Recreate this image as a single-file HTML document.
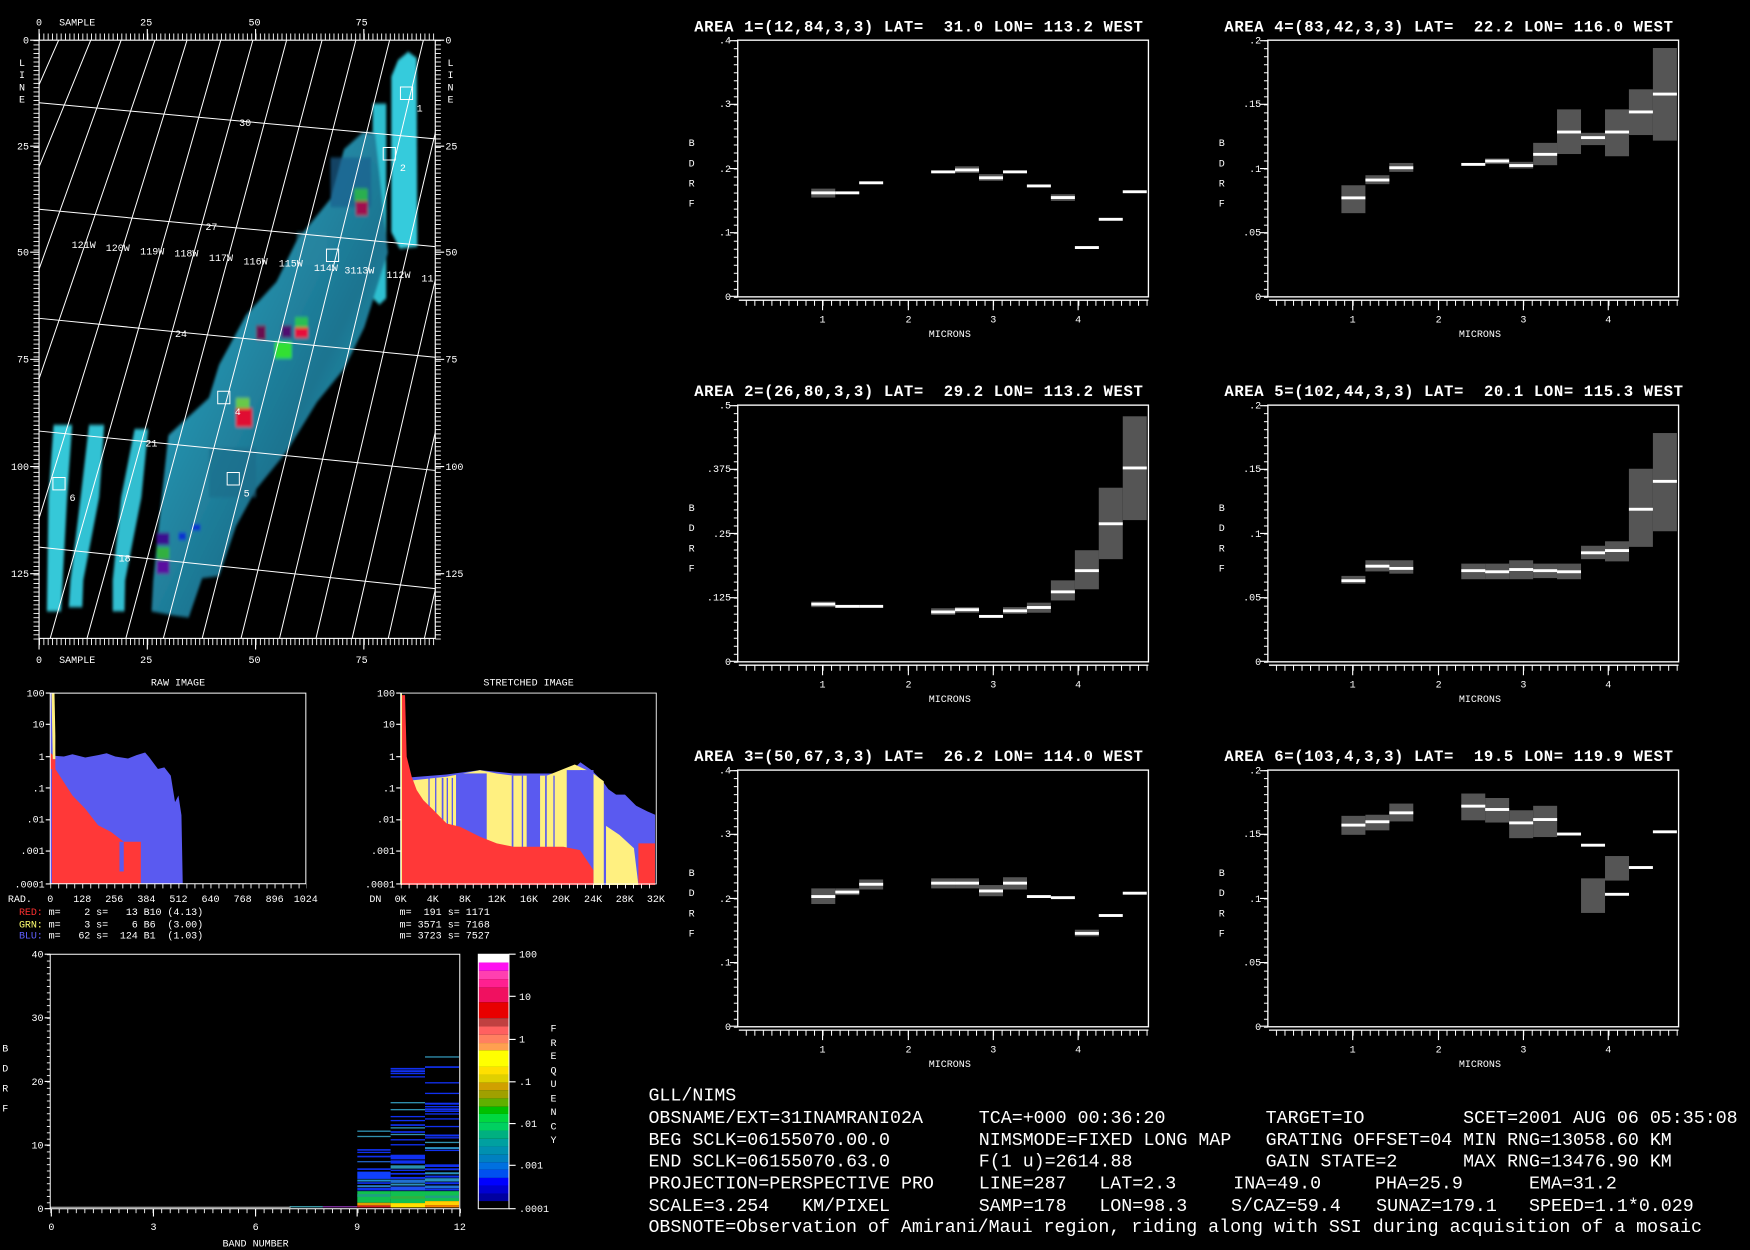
<!DOCTYPE html>
<html><head><meta charset="utf-8"><style>
html,body{margin:0;padding:0;background:#000;overflow:hidden}
svg{display:block}
text{font-family:"Liberation Mono",monospace;fill:#fff}
.s{font-size:9px}
.t{font-size:14px;font-weight:bold}
.b{font-size:16.4px}
</style></head><body>
<svg width="1750" height="1250" viewBox="0 0 1568 1120" preserveAspectRatio="none" xmlns="http://www.w3.org/2000/svg">
<defs>
<pattern id="pMH" x="35" y="0" width="3.88" height="10" patternUnits="userSpaceOnUse"><rect x="0" y="0" width="0.8" height="10" fill="#fff"/></pattern>
<pattern id="pMV" x="0" y="36" width="10" height="3.83" patternUnits="userSpaceOnUse"><rect x="0" y="0" width="10" height="0.8" fill="#fff"/></pattern>
<pattern id="pCY" x="0" y="36" width="10" height="7.1875" patternUnits="userSpaceOnUse"><rect x="0" y="0" width="10" height="0.9" fill="#fff"/></pattern>
<pattern id="pCX" x="660.6" y="0" width="7.64" height="10" patternUnits="userSpaceOnUse"><rect x="0" y="0" width="0.9" height="10" fill="#fff"/></pattern>
<pattern id="pHX" x="45" y="0" width="7.18" height="10" patternUnits="userSpaceOnUse"><rect x="0" y="0" width="0.8" height="10" fill="#fff"/></pattern>
<pattern id="pHX2" x="359" y="0" width="7.18" height="10" patternUnits="userSpaceOnUse"><rect x="0" y="0" width="0.8" height="10" fill="#fff"/></pattern>
<pattern id="pBX" x="45" y="0" width="7.65" height="10" patternUnits="userSpaceOnUse"><rect x="0" y="0" width="0.8" height="10" fill="#fff"/></pattern>
<pattern id="pBY" x="0" y="855" width="10" height="5.7" patternUnits="userSpaceOnUse"><rect x="0" y="0" width="10" height="0.8" fill="#fff"/></pattern>
<linearGradient id="gBand" x1="0" y1="0" x2="1" y2="1">
<stop offset="0" stop-color="#3fd6e6"/><stop offset="0.35" stop-color="#2590ac"/><stop offset="0.6" stop-color="#1c7490"/><stop offset="1" stop-color="#3ad0e0"/></linearGradient>
<filter id="blur" x="-10%" y="-10%" width="120%" height="120%"><feGaussianBlur stdDeviation="4"/></filter>
<clipPath id="mclip"><rect x="117" y="97" width="1173" height="1443"/></clipPath>
<g id="chart">
<rect x="661" y="36" width="368" height="230" fill="none" stroke="#fff" stroke-width="1.2"/>
<rect x="657.5" y="36" width="3.5" height="231" fill="url(#pCY)"/>
<path d="M654 36.5H661M654 93.5H661M654 151H661M654 208.5H661M654 265.5H661" stroke="#fff" stroke-width="1"/>
<path d="M662 269H1029" stroke="#fff" stroke-width="1.2"/>
<rect x="662" y="269" width="368" height="5" fill="url(#pCX)"/>
<path d="M737 269V278M813.9 269V278M890 269V278M966 269V278" stroke="#fff" stroke-width="1"/>
<text class="s" x="737" y="289" text-anchor="middle">1</text>
<text class="s" x="814" y="289" text-anchor="middle">2</text>
<text class="s" x="890" y="289" text-anchor="middle">3</text>
<text class="s" x="966" y="289" text-anchor="middle">4</text>
<text class="s" x="851" y="302" text-anchor="middle">MICRONS</text>
<text class="s" x="617" y="131">B</text><text class="s" x="617" y="149">D</text><text class="s" x="617" y="167">R</text><text class="s" x="617" y="185">F</text>
</g>
</defs>

<!-- ================= MAP ================= -->
<g transform="translate(35,36) scale(0.3026,0.3714) translate(-117,-97)">
<g clip-path="url(#mclip)">
<g filter="url(#blur)">
<polygon fill="#36cbdc" points="1180,145 1210,125 1235,140 1237,595 1185,600 1160,560 1160,185"/>
<polygon fill="#2fbfd0" points="1105,250 1145,250 1145,720 1125,735 1105,720"/>
<polygon fill="url(#gBand)" points="1075,320 1112,320 1150,610 1080,790 1020,890 940,970 850,1090 760,1180 700,1270 650,1390 600,1395 560,1490 515,1485 450,1475 455,1400 480,1200 500,1050 620,960 650,880 730,760 820,680 880,580 980,480 1020,360"/>
<polygon fill="#35c8d8" points="160,1025 215,1025 200,1200 182,1475 140,1475 145,1200"/>
<polygon fill="#33c2d4" points="265,1025 310,1025 295,1200 248,1400 245,1465 205,1465 210,1400 240,1200"/>
<polygon fill="#30bed0" points="400,1035 440,1035 420,1200 372,1400 370,1475 335,1475 335,1400 360,1200"/>
<rect x="980" y="380" width="120" height="120" fill="#1e5f8e" opacity="0.7"/>
<rect x="880" y="560" width="90" height="80" fill="#2a86a0" opacity="0.6"/>
<rect x="620" y="1080" width="140" height="120" fill="#1a6a88" opacity="0.6"/>
<rect x="1055" y="485" width="35" height="35" fill="#a01050"/>
<rect x="1050" y="455" width="40" height="30" fill="#30c040" opacity="0.8"/>
<rect x="875" y="790" width="38" height="25" fill="#e8103a"/>
<rect x="875" y="765" width="38" height="25" fill="#30d040" opacity="0.8"/>
<rect x="760" y="785" width="28" height="35" fill="#6a1050"/>
<rect x="835" y="785" width="30" height="30" fill="#501070"/>
<rect x="815" y="825" width="50" height="40" fill="#30e030"/>
<rect x="700" y="985" width="48" height="45" fill="#e01030"/>
<rect x="700" y="960" width="40" height="25" fill="#70d040" opacity="0.9"/>
<rect x="465" y="1285" width="38" height="30" fill="#3a1090"/>
<rect x="465" y="1320" width="38" height="30" fill="#30b040"/>
<rect x="465" y="1350" width="38" height="35" fill="#5a10a0"/>
<rect x="530" y="1285" width="22" height="18" fill="#1030d0"/>
<rect x="570" y="1265" width="25" height="15" fill="#1030d0"/>
</g>
<g stroke="#fff" stroke-width="1" fill="none">
<path vector-effect="non-scaling-stroke" d="M175,97L-604,1540M270,97L-452,1540M360,97L-275,1540M460,97L-146,1540M555,97L7,1540M655,97L150,1540M750,97L259,1540M850,97L374,1540M955,97L485,1540M1055,97L600,1540M1155,97L715,1540M1255,97L829,1540M1355,97L937,1540M1455,97L1044,1540M1555,97L1151,1540M1655,97L1258,1540"/>
<path vector-effect="non-scaling-stroke" d="M117,248L1290,335M117,505L1290,595M117,768L1290,862M117,1040L1290,1135M117,1320L1290,1420"/>
<path vector-effect="non-scaling-stroke" d="M1187,210h36v30h-36zM1136,356h36v30h-36zM968,601h36v30h-36zM646,944h36v30h-36zM674,1140h36v30h-36zM158,1152h36v30h-36z"/>
</g>
</g>
</g>
<rect x="35" y="36" width="355" height="536" fill="none" stroke="#fff" stroke-width="1"/>
<rect x="35" y="30" width="356" height="6" fill="url(#pMH)"/>
<rect x="35" y="572" width="356" height="6" fill="url(#pMH)"/>
<rect x="30" y="36" width="5" height="537" fill="url(#pMV)"/>
<rect x="390" y="36" width="5" height="537" fill="url(#pMV)"/>
<path d="M35 26V36M132 26V36M229 26V36M326 26V36M35 572V582M132 572V582M229 572V582M326 572V582M27 36H35M27 131H35M27 226H35M27 322H35M27 418H35M27 514H35M390 36H398M390 131H398M390 226H398M390 322H398M390 418H398M390 514H398" stroke="#fff" stroke-width="1"/>
<g>
<text class="s" x="35" y="23" text-anchor="middle">0</text>
<text class="s" x="53" y="23">SAMPLE</text>
<text class="s" x="131" y="23" text-anchor="middle">25</text>
<text class="s" x="228" y="23" text-anchor="middle">50</text>
<text class="s" x="324" y="23" text-anchor="middle">75</text>
<text class="s" x="35" y="594" text-anchor="middle">0</text>
<text class="s" x="53" y="594">SAMPLE</text>
<text class="s" x="131" y="594" text-anchor="middle">25</text>
<text class="s" x="228" y="594" text-anchor="middle">50</text>
<text class="s" x="324" y="594" text-anchor="middle">75</text>
<text class="s" x="26" y="39" text-anchor="end">0</text>
<text class="s" x="26" y="134" text-anchor="end">25</text>
<text class="s" x="26" y="229" text-anchor="end">50</text>
<text class="s" x="26" y="325" text-anchor="end">75</text>
<text class="s" x="26" y="421" text-anchor="end">100</text>
<text class="s" x="26" y="517" text-anchor="end">125</text>
<text class="s" x="17" y="59">L</text><text class="s" x="17" y="70">I</text><text class="s" x="17" y="81">N</text><text class="s" x="17" y="92">E</text>
<text class="s" x="399" y="39">0</text>
<text class="s" x="399" y="134">25</text>
<text class="s" x="399" y="229">50</text>
<text class="s" x="399" y="325">75</text>
<text class="s" x="399" y="421">100</text>
<text class="s" x="399" y="517">125</text>
<text class="s" x="401" y="59">L</text><text class="s" x="401" y="70">I</text><text class="s" x="401" y="81">N</text><text class="s" x="401" y="92">E</text>
</g>
<g>
<text class="s" x="75" y="222" text-anchor="middle">121W</text>
<text class="s" x="105.5" y="225" text-anchor="middle">120W</text>
<text class="s" x="136.4" y="228" text-anchor="middle">119W</text>
<text class="s" x="167" y="230" text-anchor="middle">118W</text>
<text class="s" x="198" y="234" text-anchor="middle">117W</text>
<text class="s" x="229" y="237" text-anchor="middle">116W</text>
<text class="s" x="260.5" y="239" text-anchor="middle">115W</text>
<text class="s" x="292" y="243" text-anchor="middle">114W</text>
<text class="s" x="322" y="245" text-anchor="middle">3113W</text>
<text class="s" x="357" y="249" text-anchor="middle">112W</text>
<text class="s" x="383" y="252" text-anchor="middle">11</text>
<text class="s" x="219.6" y="113" text-anchor="middle">30</text>
<text class="s" x="189.4" y="206" text-anchor="middle">27</text>
<text class="s" x="162.2" y="302" text-anchor="middle">24</text>
<text class="s" x="135.6" y="400" text-anchor="middle">21</text>
<text class="s" x="111.7" y="503" text-anchor="middle">18</text>
<text class="s" x="376" y="100" text-anchor="middle">1</text>
<text class="s" x="361" y="153" text-anchor="middle">2</text>
<text class="s" x="213" y="372" text-anchor="middle">4</text>
<text class="s" x="221" y="445" text-anchor="middle">5</text>
<text class="s" x="65" y="449" text-anchor="middle">6</text>
</g>

<!-- ================= HISTOGRAMS ================= -->
<g transform="translate(45,621) scale(0.383,0.296) translate(-118,-70)">
<polygon fill="#5a5af0" points="118,70 122,70 130,260 150,262 170,255 200,265 230,258 250,252 270,262 300,268 320,258 340,250 350,265 370,300 385,295 400,320 410,400 418,380 425,440 428,647 118,647"/>
<polygon fill="#ff3838" points="118,250 130,265 130,300 150,340 170,380 200,420 230,470 260,490 290,520 330,520 330,647 118,647"/>
<polygon fill="#5a5af0" points="280,520 290,520 290,610 280,610"/>
<polygon fill="#fff080" points="121,70 128,70 130,200 130,270 124,270"/>
<rect x="118" y="300" width="4" height="347" fill="#5a5af0"/>
<rect x="118" y="70" width="598" height="577" fill="none" stroke="#fff" stroke-width="1" vector-effect="non-scaling-stroke"/>
</g>
<!-- stretched in page coords -->
<polygon fill="#5a5af0" points="362,697 400,694 430,690 460,693 500,693 515,688 520,683 530,690 540,700 545,707 552,712 560,712 570,722 580,727 587,730 587,793 362,793"/>
<polygon fill="#fff080" points="362,700 400,696 430,690 445,693 460,695 490,695 515,685 530,692 541,700 541,793 362,793"/>
<polygon fill="#fff080" points="543,740 555,748 568,760 572,793 543,793"/>
<g fill="#5a5af0">
<rect x="408.6" y="693" width="27.5" height="100"/>
<rect x="471.9" y="694" width="12" height="99"/>
<rect x="507.8" y="690" width="24" height="103"/>
<rect x="383.8" y="697" width="1.2" height="96"/><rect x="389.8" y="697" width="1.2" height="96"/><rect x="395.8" y="697" width="1.5" height="96"/><rect x="400.2" y="697" width="1.2" height="96"/><rect x="404.7" y="697" width="1.2" height="96"/><rect x="458.5" y="695" width="1.5" height="98"/><rect x="467.5" y="695" width="1.2" height="98"/><rect x="488.4" y="695" width="1.5" height="98"/><rect x="495.8" y="695" width="1.2" height="98"/><rect x="520" y="690" width="1.5" height="103"/>
</g>
<polygon fill="#ff3838" points="359,622.8 362.9,622.8 364.4,678 368.9,696 373.4,707.9 379.3,716.9 388.3,725.8 400.2,737.8 412.2,740.8 430.1,749.7 445.1,755.7 460,758.7 475,758.7 489.9,758.7 504.8,758.7 519.7,761.7 531.7,779.6 531.7,793 359,793"/>
<polygon fill="#ff3838" points="572,755.7 586.9,755.7 586.9,793 572,793"/>
<rect x="359" y="621" width="1.2" height="172" fill="#fff080"/>
<rect x="359" y="621" width="229" height="171" fill="none" stroke="#fff" stroke-width="0.8"/>
<rect x="45" y="792" width="230" height="4" fill="url(#pHX)"/>
<rect x="359" y="792" width="229" height="4" fill="url(#pHX2)"/>
<path d="M41 621H45M41 649H45M41 678H45M41 706H45M41 734.5H45M41 762.5H45M41 792H45M355 621H359M355 649H359M355 678H359M355 706H359M355 734.5H359M355 762.5H359M355 792H359" stroke="#fff"/>
<text class="s" x="159.5" y="614" text-anchor="middle">RAW IMAGE</text>
<text class="s" x="473.6" y="614" text-anchor="middle">STRETCHED IMAGE</text>
<g>
<text class="s" x="40" y="624" text-anchor="end">100</text><text class="s" x="40" y="652" text-anchor="end">10</text><text class="s" x="40" y="681" text-anchor="end">1</text><text class="s" x="40" y="709" text-anchor="end">.1</text><text class="s" x="40" y="737" text-anchor="end">.01</text><text class="s" x="40" y="765" text-anchor="end">.001</text><text class="s" x="40" y="795" text-anchor="end">.0001</text>
<text class="s" x="354" y="624" text-anchor="end">100</text><text class="s" x="354" y="652" text-anchor="end">10</text><text class="s" x="354" y="681" text-anchor="end">1</text><text class="s" x="354" y="709" text-anchor="end">.1</text><text class="s" x="354" y="737" text-anchor="end">.01</text><text class="s" x="354" y="765" text-anchor="end">.001</text><text class="s" x="354" y="795" text-anchor="end">.0001</text>
</g>
<text class="s" x="7" y="808">RAD.</text>
<text class="s" x="45" y="808" text-anchor="middle">0</text><text class="s" x="73.7" y="808" text-anchor="middle">128</text><text class="s" x="102.4" y="808" text-anchor="middle">256</text><text class="s" x="131.2" y="808" text-anchor="middle">384</text><text class="s" x="159.9" y="808" text-anchor="middle">512</text><text class="s" x="188.6" y="808" text-anchor="middle">640</text><text class="s" x="217.4" y="808" text-anchor="middle">768</text><text class="s" x="246.1" y="808" text-anchor="middle">896</text><text class="s" x="274" y="808" text-anchor="middle">1024</text>
<text class="s" x="331" y="808">DN</text>
<text class="s" x="359" y="808" text-anchor="middle">0K</text><text class="s" x="387.8" y="808" text-anchor="middle">4K</text><text class="s" x="416.5" y="808" text-anchor="middle">8K</text><text class="s" x="445.2" y="808" text-anchor="middle">12K</text><text class="s" x="474" y="808" text-anchor="middle">16K</text><text class="s" x="502.7" y="808" text-anchor="middle">20K</text><text class="s" x="531.4" y="808" text-anchor="middle">24K</text><text class="s" x="559.8" y="808" text-anchor="middle">28K</text><text class="s" x="587.7" y="808" text-anchor="middle">32K</text>
<text class="s" x="17" y="820" xml:space="preserve" textLength="165"><tspan fill="#ff3030">RED:</tspan> m=    2 s=   13 B10 (4.13)</text>
<text class="s" x="17" y="831" xml:space="preserve" textLength="165"><tspan fill="#ffff70">GRN:</tspan> m=    3 s=    6 B6  (3.00)</text>
<text class="s" x="17" y="841" xml:space="preserve" textLength="165"><tspan fill="#6060ff">BLU:</tspan> m=   62 s=  124 B1  (1.03)</text>
<text class="s" x="358" y="820" xml:space="preserve">m=  191 s= 1171</text>
<text class="s" x="358" y="831" xml:space="preserve">m= 3571 s= 7168</text>
<text class="s" x="358" y="841" xml:space="preserve">m= 3723 s= 7527</text>

<!-- ================= BDRF / FREQ ================= -->
<g transform="translate(45,855) scale(0.3315,0.2969) translate(-133,-40)">
<rect x="780" y="800" width="90" height="4" fill="#40a0b0"/>
<rect x="870" y="800" width="93" height="4" fill="#8030a0"/>
<rect x="133" y="802" width="650" height="3" fill="#ccc"/>
<g fill="#1030f0">
<rect x="963" y="572" width="90" height="4" fill="#3090b0"/><rect x="963" y="588" width="90" height="4" fill="#3090b0"/>
<rect x="963" y="628" width="90" height="5"/><rect x="963" y="636" width="90" height="4"/><rect x="963" y="648" width="90" height="5"/><rect x="963" y="664" width="90" height="4" fill="#2060c0"/><rect x="963" y="686" width="90" height="5"/><rect x="963" y="696" width="90" height="22" fill="#1040ff"/><rect x="963" y="720" width="90" height="6" fill="#2090d0"/><rect x="963" y="728" width="90" height="5"/><rect x="963" y="737" width="90" height="6" fill="#2a80c0"/><rect x="963" y="745" width="90" height="8"/>
<rect x="1053" y="383" width="93" height="5"/><rect x="1053" y="390" width="93" height="6"/><rect x="1053" y="398" width="93" height="4"/><rect x="1053" y="408" width="93" height="4"/>
<rect x="1053" y="486" width="93" height="4" fill="#3090b0"/><rect x="1053" y="507" width="93" height="4" fill="#3090b0"/><rect x="1053" y="528" width="93" height="4"/><rect x="1053" y="540" width="93" height="4"/><rect x="1053" y="553" width="93" height="5"/><rect x="1053" y="562" width="93" height="4" fill="#3090b0"/><rect x="1053" y="574" width="93" height="5"/><rect x="1053" y="582" width="93" height="4" fill="#3090b0"/><rect x="1053" y="598" width="93" height="4"/><rect x="1053" y="613" width="93" height="4"/><rect x="1053" y="645" width="93" height="14"/><rect x="1053" y="662" width="93" height="10"/><rect x="1053" y="677" width="93" height="10" fill="#2a90b0"/><rect x="1053" y="690" width="93" height="4"/><rect x="1053" y="700" width="93" height="5"/><rect x="1053" y="712" width="93" height="6"/><rect x="1053" y="720" width="93" height="10" fill="#2070d0"/><rect x="1053" y="732" width="93" height="6" fill="#2a90c0"/><rect x="1053" y="741" width="93" height="12" fill="#2050f0"/>
<rect x="1146" y="348" width="92" height="4" fill="#3090b0"/><rect x="1146" y="378" width="92" height="5"/><rect x="1146" y="426" width="92" height="4"/><rect x="1146" y="458" width="92" height="4"/><rect x="1146" y="488" width="92" height="6"/><rect x="1146" y="498" width="92" height="4"/><rect x="1146" y="505" width="92" height="6"/><rect x="1146" y="512" width="92" height="4"/><rect x="1146" y="520" width="92" height="4"/><rect x="1146" y="535" width="92" height="4"/><rect x="1146" y="558" width="92" height="4"/><rect x="1146" y="584" width="92" height="6"/><rect x="1146" y="592" width="92" height="4"/><rect x="1146" y="606" width="92" height="4" fill="#3090b0"/><rect x="1146" y="622" width="92" height="6" fill="#2a90c0"/><rect x="1146" y="630" width="92" height="4"/><rect x="1146" y="674" width="92" height="8"/><rect x="1146" y="686" width="92" height="6"/><rect x="1146" y="698" width="92" height="6" fill="#2a90c0"/><rect x="1146" y="708" width="92" height="6"/><rect x="1146" y="716" width="92" height="10" fill="#2a90c0"/><rect x="1146" y="728" width="92" height="6"/><rect x="1146" y="738" width="92" height="8" fill="#2070d0"/><rect x="1146" y="747" width="92" height="6"/>
</g>
<rect x="963" y="755" width="90" height="35" fill="#10c050"/><rect x="963" y="764" width="90" height="8" fill="#20a080"/><rect x="963" y="790" width="90" height="8" fill="#e0a000"/><rect x="963" y="798" width="90" height="6" fill="#d02020"/>
<rect x="1053" y="755" width="93" height="36" fill="#10c050"/><rect x="1053" y="770" width="93" height="8" fill="#30b040"/><rect x="1053" y="791" width="93" height="13" fill="#ffe000"/>
<rect x="1146" y="755" width="92" height="30" fill="#10c050"/><rect x="1146" y="768" width="92" height="8" fill="#20a080"/><rect x="1146" y="785" width="92" height="12" fill="#ffd000"/><rect x="1146" y="797" width="92" height="7" fill="#f08000"/>
<rect x="1290" y="40" width="83" height="25" fill="#ffffff"/><rect x="1290" y="65" width="83" height="25" fill="#ff10f0"/><rect x="1290" y="90" width="83" height="25" fill="#ff40b0"/><rect x="1290" y="115" width="83" height="25" fill="#ff2090"/><rect x="1290" y="140" width="83" height="45" fill="#f01060"/><rect x="1290" y="185" width="83" height="48" fill="#e80000"/><rect x="1290" y="233" width="83" height="25" fill="#c04040"/><rect x="1290" y="258" width="83" height="25" fill="#ff6060"/><rect x="1290" y="283" width="83" height="25" fill="#ff8060"/><rect x="1290" y="308" width="83" height="22" fill="#ffa050"/><rect x="1290" y="330" width="83" height="50" fill="#ffff00"/><rect x="1290" y="380" width="83" height="23" fill="#ffe000"/><rect x="1290" y="403" width="83" height="25" fill="#e0d000"/><rect x="1290" y="428" width="83" height="22" fill="#d0a000"/><rect x="1290" y="450" width="83" height="25" fill="#a0a000"/><rect x="1290" y="475" width="83" height="25" fill="#60b000"/><rect x="1290" y="500" width="83" height="22" fill="#00c000"/><rect x="1290" y="522" width="83" height="25" fill="#00d840"/><rect x="1290" y="547" width="83" height="25" fill="#00d060"/><rect x="1290" y="572" width="83" height="25" fill="#00b080"/><rect x="1290" y="597" width="83" height="23" fill="#00a0a0"/><rect x="1290" y="620" width="83" height="25" fill="#0090b0"/><rect x="1290" y="645" width="83" height="23" fill="#0080c0"/><rect x="1290" y="668" width="83" height="22" fill="#0070e0"/><rect x="1290" y="690" width="83" height="25" fill="#0050f0"/><rect x="1290" y="715" width="83" height="23" fill="#0000ff"/><rect x="1290" y="738" width="83" height="24" fill="#0000d0"/><rect x="1290" y="762" width="83" height="23" fill="#0000a0"/>
<rect x="1290" y="40" width="83" height="768" fill="none" stroke="#fff" stroke-width="1" vector-effect="non-scaling-stroke"/>
<rect x="133" y="40" width="1107" height="768" fill="none" stroke="#fff" stroke-width="1" vector-effect="non-scaling-stroke"/>
</g>
<rect x="45" y="1083" width="368" height="4" fill="url(#pBX)"/>
<rect x="42" y="855" width="3" height="228" fill="url(#pBY)"/>
<path d="M46 1083V1090M137.5 1083V1090M229 1083V1090M320 1083V1090M412 1083V1090M40 855H45M40 912H45M40 969H45M40 1026H45M40 1083H45M456 855H462M456 892.7H462M456 931.3H462M456 969.3H462M456 1006.7H462M456 1044.1H462M456 1083H462" stroke="#fff"/>
<text class="s" x="39" y="858" text-anchor="end">40</text><text class="s" x="39" y="915" text-anchor="end">30</text><text class="s" x="39" y="972" text-anchor="end">20</text><text class="s" x="39" y="1029" text-anchor="end">10</text><text class="s" x="39" y="1086" text-anchor="end">0</text>
<text class="s" x="46" y="1102" text-anchor="middle">0</text><text class="s" x="137.5" y="1102" text-anchor="middle">3</text><text class="s" x="229" y="1102" text-anchor="middle">6</text><text class="s" x="320" y="1102" text-anchor="middle">9</text><text class="s" x="412" y="1102" text-anchor="middle">12</text>
<text class="s" x="229" y="1117" text-anchor="middle">BAND NUMBER</text>
<text class="s" x="2" y="942">B</text><text class="s" x="2" y="960">D</text><text class="s" x="2" y="978">R</text><text class="s" x="2" y="996">F</text>
<text class="s" x="465" y="858">100</text><text class="s" x="465" y="896">10</text><text class="s" x="465" y="934">1</text><text class="s" x="465" y="972">.1</text><text class="s" x="465" y="1010">.01</text><text class="s" x="465" y="1047">.001</text><text class="s" x="465" y="1086">.0001</text>
<g><text class="s" x="496" y="924" text-anchor="middle">F</text><text class="s" x="496" y="937" text-anchor="middle">R</text><text class="s" x="496" y="949" text-anchor="middle">E</text><text class="s" x="496" y="962" text-anchor="middle">Q</text><text class="s" x="496" y="974" text-anchor="middle">U</text><text class="s" x="496" y="987" text-anchor="middle">E</text><text class="s" x="496" y="999" text-anchor="middle">N</text><text class="s" x="496" y="1012" text-anchor="middle">C</text><text class="s" x="496" y="1024" text-anchor="middle">Y</text></g>

<!-- ================= CHARTS ================= -->
<use href="#chart"/>
<use href="#chart" transform="translate(475,0)"/>
<use href="#chart" transform="translate(0,327)"/>
<use href="#chart" transform="translate(475,327)"/>
<use href="#chart" transform="translate(0,654)"/>
<use href="#chart" transform="translate(475,654)"/>

<text class="t" x="622" y="28" xml:space="preserve" textLength="402">AREA 1=(12,84,3,3) LAT=  31.0 LON= 113.2 WEST</text>
<text class="t" x="1097" y="28" xml:space="preserve" textLength="402">AREA 4=(83,42,3,3) LAT=  22.2 LON= 116.0 WEST</text>
<text class="t" x="622" y="355" xml:space="preserve" textLength="402">AREA 2=(26,80,3,3) LAT=  29.2 LON= 113.2 WEST</text>
<text class="t" x="1097" y="355" xml:space="preserve" textLength="411">AREA 5=(102,44,3,3) LAT=  20.1 LON= 115.3 WEST</text>
<text class="t" x="622" y="682" xml:space="preserve" textLength="402">AREA 3=(50,67,3,3) LAT=  26.2 LON= 114.0 WEST</text>
<text class="t" x="1097" y="682" xml:space="preserve" textLength="402">AREA 6=(103,4,3,3) LAT=  19.5 LON= 119.9 WEST</text>

<g>
<text class="s" x="655" y="39" text-anchor="end">.4</text><text class="s" x="655" y="96" text-anchor="end">.3</text><text class="s" x="655" y="154" text-anchor="end">.2</text><text class="s" x="655" y="211" text-anchor="end">.1</text><text class="s" x="655" y="269" text-anchor="end">0</text>
<text class="s" x="1130" y="39" text-anchor="end">.2</text><text class="s" x="1130" y="96" text-anchor="end">.15</text><text class="s" x="1130" y="154" text-anchor="end">.1</text><text class="s" x="1130" y="211" text-anchor="end">.05</text><text class="s" x="1130" y="269" text-anchor="end">0</text>
<text class="s" x="655" y="366" text-anchor="end">.5</text><text class="s" x="655" y="423" text-anchor="end">.375</text><text class="s" x="655" y="481" text-anchor="end">.25</text><text class="s" x="655" y="538" text-anchor="end">.125</text><text class="s" x="655" y="596" text-anchor="end">0</text>
<text class="s" x="1130" y="366" text-anchor="end">.2</text><text class="s" x="1130" y="423" text-anchor="end">.15</text><text class="s" x="1130" y="481" text-anchor="end">.1</text><text class="s" x="1130" y="538" text-anchor="end">.05</text><text class="s" x="1130" y="596" text-anchor="end">0</text>
<text class="s" x="655" y="693" text-anchor="end">.4</text><text class="s" x="655" y="750" text-anchor="end">.3</text><text class="s" x="655" y="808" text-anchor="end">.2</text><text class="s" x="655" y="865" text-anchor="end">.1</text><text class="s" x="655" y="923" text-anchor="end">0</text>
<text class="s" x="1130" y="693" text-anchor="end">.2</text><text class="s" x="1130" y="750" text-anchor="end">.15</text><text class="s" x="1130" y="808" text-anchor="end">.1</text><text class="s" x="1130" y="865" text-anchor="end">.05</text><text class="s" x="1130" y="923" text-anchor="end">0</text>
</g>

<g fill="#555">
<rect x="726.9" y="169" width="21.5" height="8"/>
<rect x="855.7" y="149" width="21.5" height="6"/>
<rect x="877.2" y="156" width="21.5" height="6"/>
<rect x="941.6" y="174" width="21.5" height="6"/>
<rect x="1201.9" y="166" width="21.5" height="25"/><rect x="1223.4" y="157" width="21.5" height="8"/><rect x="1244.8" y="146" width="21.5" height="8"/><rect x="1330.7" y="142" width="21.5" height="5"/><rect x="1352.2" y="145" width="21.5" height="6"/><rect x="1373.7" y="128" width="21.5" height="20"/><rect x="1395.1" y="98" width="21.5" height="40"/><rect x="1416.6" y="119" width="21.5" height="11"/><rect x="1438.1" y="98" width="21.5" height="42"/><rect x="1459.5" y="80" width="21.5" height="41"/><rect x="1481" y="43" width="21.5" height="83"/>
<rect x="726.9" y="539" width="21.5" height="5"/><rect x="834.3" y="545" width="21.5" height="6"/><rect x="855.7" y="544" width="21.5" height="5"/><rect x="898.7" y="544" width="21.5" height="6"/><rect x="920.1" y="540" width="21.5" height="9"/><rect x="941.6" y="520" width="21.5" height="18"/><rect x="963.1" y="493" width="21.5" height="35"/><rect x="984.5" y="437" width="21.5" height="64"/><rect x="1006" y="373" width="21.5" height="93"/>
<rect x="1201.9" y="516" width="21.5" height="7"/><rect x="1223.4" y="502" width="21.5" height="10"/><rect x="1244.8" y="502" width="21.5" height="12"/><rect x="1309.3" y="505" width="21.5" height="14"/><rect x="1330.7" y="505" width="21.5" height="14"/><rect x="1352.2" y="502" width="21.5" height="17"/><rect x="1373.7" y="505" width="21.5" height="13"/><rect x="1395.1" y="505" width="21.5" height="14"/><rect x="1416.6" y="489" width="21.5" height="12"/><rect x="1438.1" y="485" width="21.5" height="18"/><rect x="1459.5" y="420" width="21.5" height="70"/><rect x="1481" y="388" width="21.5" height="88"/>
<rect x="726.9" y="796" width="21.5" height="14"/><rect x="748.4" y="796" width="21.5" height="6"/><rect x="769.8" y="788" width="21.5" height="9"/><rect x="834.3" y="787" width="21.5" height="9"/><rect x="855.7" y="787" width="21.5" height="9"/><rect x="877.2" y="793" width="21.5" height="10"/><rect x="898.7" y="786" width="21.5" height="11"/><rect x="963.1" y="833" width="21.5" height="6"/>
<rect x="1201.9" y="731" width="21.5" height="17"/><rect x="1223.4" y="730" width="21.5" height="14"/><rect x="1244.8" y="720" width="21.5" height="16"/><rect x="1309.3" y="711" width="21.5" height="24"/><rect x="1330.7" y="715" width="21.5" height="22"/><rect x="1352.2" y="726" width="21.5" height="25"/><rect x="1373.7" y="722" width="21.5" height="28"/><rect x="1416.6" y="787" width="21.5" height="31"/><rect x="1438.1" y="767" width="21.5" height="22"/>
</g>
<g fill="#fff">
<rect x="726.9" y="171.5" width="21.5" height="2.6"/><rect x="748.4" y="171.5" width="21.5" height="2.6"/><rect x="769.8" y="162.5" width="21.5" height="2.6"/><rect x="834.3" y="152.7" width="21.5" height="2.6"/><rect x="855.7" y="151" width="21.5" height="2.6"/><rect x="877.2" y="158" width="21.5" height="2.6"/><rect x="898.7" y="152.7" width="21.5" height="2.6"/><rect x="920.1" y="165.3" width="21.5" height="2.6"/><rect x="941.6" y="175.7" width="21.5" height="2.6"/><rect x="963.1" y="220.5" width="21.5" height="2.6"/><rect x="984.5" y="195.2" width="21.5" height="2.6"/><rect x="1006" y="170.5" width="21.5" height="2.6"/>
<rect x="1201.9" y="176" width="21.5" height="2.6"/><rect x="1223.4" y="160" width="21.5" height="2.6"/><rect x="1244.8" y="149" width="21.5" height="2.6"/><rect x="1309.3" y="146" width="21.5" height="2.6"/><rect x="1330.7" y="143" width="21.5" height="2.6"/><rect x="1352.2" y="147" width="21.5" height="2.6"/><rect x="1373.7" y="137" width="21.5" height="2.6"/><rect x="1395.1" y="117" width="21.5" height="2.6"/><rect x="1416.6" y="122" width="21.5" height="2.6"/><rect x="1438.1" y="117" width="21.5" height="2.6"/><rect x="1459.5" y="99" width="21.5" height="2.6"/><rect x="1481" y="83" width="21.5" height="2.6"/>
<rect x="726.9" y="540" width="21.5" height="2.6"/><rect x="748.4" y="542" width="21.5" height="2.6"/><rect x="769.8" y="542" width="21.5" height="2.6"/><rect x="834.3" y="547" width="21.5" height="2.6"/><rect x="855.7" y="545" width="21.5" height="2.6"/><rect x="877.2" y="551" width="21.5" height="2.6"/><rect x="898.7" y="546" width="21.5" height="2.6"/><rect x="920.1" y="543" width="21.5" height="2.6"/><rect x="941.6" y="529" width="21.5" height="2.6"/><rect x="963.1" y="510" width="21.5" height="2.6"/><rect x="984.5" y="468" width="21.5" height="2.6"/><rect x="1006" y="418" width="21.5" height="2.6"/>
<rect x="1201.9" y="519" width="21.5" height="2.6"/><rect x="1223.4" y="506" width="21.5" height="2.6"/><rect x="1244.8" y="508" width="21.5" height="2.6"/><rect x="1309.3" y="510" width="21.5" height="2.6"/><rect x="1330.7" y="511" width="21.5" height="2.6"/><rect x="1352.2" y="509" width="21.5" height="2.6"/><rect x="1373.7" y="510" width="21.5" height="2.6"/><rect x="1395.1" y="511" width="21.5" height="2.6"/><rect x="1416.6" y="494" width="21.5" height="2.6"/><rect x="1438.1" y="492" width="21.5" height="2.6"/><rect x="1459.5" y="455" width="21.5" height="2.6"/><rect x="1481" y="430" width="21.5" height="2.6"/>
<rect x="726.9" y="802" width="21.5" height="2.6"/><rect x="748.4" y="798" width="21.5" height="2.6"/><rect x="769.8" y="791" width="21.5" height="2.6"/><rect x="834.3" y="790" width="21.5" height="2.6"/><rect x="855.7" y="790" width="21.5" height="2.6"/><rect x="877.2" y="797" width="21.5" height="2.6"/><rect x="898.7" y="790" width="21.5" height="2.6"/><rect x="920.1" y="802" width="21.5" height="2.6"/><rect x="941.6" y="803" width="21.5" height="2.6"/><rect x="963.1" y="835" width="21.5" height="2.6"/><rect x="984.5" y="819" width="21.5" height="2.6"/><rect x="1006" y="799" width="21.5" height="2.6"/>
<rect x="1201.9" y="738" width="21.5" height="2.6"/><rect x="1223.4" y="735" width="21.5" height="2.6"/><rect x="1244.8" y="727" width="21.5" height="2.6"/><rect x="1309.3" y="721" width="21.5" height="2.6"/><rect x="1330.7" y="724" width="21.5" height="2.6"/><rect x="1352.2" y="736" width="21.5" height="2.6"/><rect x="1373.7" y="733" width="21.5" height="2.6"/><rect x="1395.1" y="746" width="21.5" height="2.6"/><rect x="1416.6" y="756" width="21.5" height="2.6"/><rect x="1438.1" y="800" width="21.5" height="2.6"/><rect x="1459.5" y="776" width="21.5" height="2.6"/><rect x="1481" y="744" width="21.5" height="2.6"/>
</g>

<!-- ================= INFO TEXT ================= -->
<g>
<text class="b" x="581" y="986">GLL/NIMS</text>
<text class="b" x="581" y="1006">OBSNAME/EXT=31INAMRANI02A</text><text class="b" x="877" y="1006">TCA=+000 00:36:20</text><text class="b" x="1134" y="1006">TARGET=IO</text><text class="b" x="1311" y="1006">SCET=2001 AUG 06 05:35:08</text>
<text class="b" x="581" y="1026">BEG SCLK=06155070.00.0</text><text class="b" x="877" y="1026">NIMSMODE=FIXED LONG MAP</text><text class="b" x="1134" y="1026">GRATING OFFSET=04</text><text class="b" x="1311" y="1026">MIN RNG=13058.60 KM</text>
<text class="b" x="581" y="1045">END SCLK=06155070.63.0</text><text class="b" x="877" y="1045">F(1 u)=2614.88</text><text class="b" x="1134" y="1045">GAIN STATE=2</text><text class="b" x="1311" y="1045">MAX RNG=13476.90 KM</text>
<text class="b" x="581" y="1065">PROJECTION=PERSPECTIVE PRO</text><text class="b" x="877" y="1065">LINE=287</text><text class="b" x="985" y="1065">LAT=2.3</text><text class="b" x="1105" y="1065">INA=49.0</text><text class="b" x="1232" y="1065">PHA=25.9</text><text class="b" x="1370" y="1065">EMA=31.2</text>
<text class="b" x="581" y="1085" xml:space="preserve">SCALE=3.254   KM/PIXEL</text><text class="b" x="877" y="1085">SAMP=178</text><text class="b" x="985" y="1085">LON=98.3</text><text class="b" x="1103" y="1085">S/CAZ=59.4</text><text class="b" x="1233" y="1085">SUNAZ=179.1</text><text class="b" x="1370" y="1085">SPEED=1.1*0.029</text>
<text class="b" x="581" y="1104" textLength="944">OBSNOTE=Observation of Amirani/Maui region, riding along with SSI during acquisition of a mosaic</text>
</g>
</svg>
</body></html>
